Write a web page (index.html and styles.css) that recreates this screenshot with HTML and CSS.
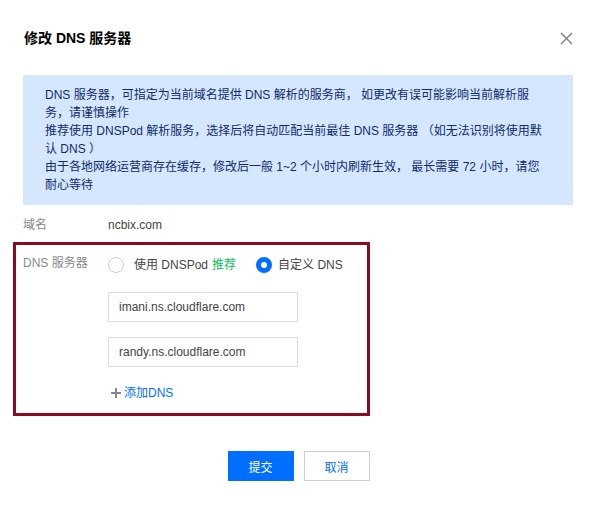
FILE: index.html
```html
<!DOCTYPE html>
<html lang="zh-CN">
<head>
<meta charset="utf-8">
<title>修改 DNS 服务器</title>
<link rel="stylesheet" href="styles.css">
</head>
<body>
<div class="dialog">
  <div class="dialog-head">
    <h3 class="dialog-title">修改 DNS 服务器</h3>
    <button class="close-btn" aria-label="关闭">
      <svg width="13" height="13" viewBox="0 0 13 13"><path d="M1 1L12 12M12 1L1 12" stroke="#888" stroke-width="1.6" fill="none"/></svg>
    </button>
  </div>
  <div class="info">
    DNS 服务器，可指定为当前域名提供 DNS 解析的服务商， 如更改有误可能影响当前解析服务，请谨慎操作<br>
    推荐使用 DNSPod 解析服务，选择后将自动匹配当前最佳 DNS 服务器 （如无法识别将使用默认 DNS ）<br>
    由于各地网络运营商存在缓存，修改后一般 1~2 个小时内刷新生效， 最长需要 72 小时，请您耐心等待
  </div>
  <div class="form">
    <div class="row">
      <div class="label">域名</div>
      <div class="value">ncbix.com</div>
    </div>
    <div class="highlight">
      <div class="row">
        <div class="label">DNS 服务器</div>
        <div class="field">
          <div class="radios">
            <label class="radio"><span class="dot"></span>使用 DNSPod <span class="rec">推荐</span></label>
            <label class="radio checked"><span class="dot"></span>自定义 DNS</label>
          </div>
          <div class="input">imani.ns.cloudflare.com</div>
          <div class="input">randy.ns.cloudflare.com</div>
          <a class="add"><span class="plus"></span>添加DNS</a>
        </div>
      </div>
    </div>
  </div>
  <div class="footer">
    <button class="btn primary">提交</button>
    <button class="btn weak">取消</button>
  </div>
</div>
</body>
</html>
```

FILE: styles.css
```css
html, body {
  margin: 0;
  padding: 0;
  background: #fff;
}
body {
  font-family: "Liberation Sans", Arial, "Noto Sans CJK SC", sans-serif;
  font-size: 12px;
  color: #444;
}
.dialog {
  width: 597px;
  height: 506px;
  box-sizing: border-box;
  padding: 0 24px 0 23px;
}
.dialog-head {
  display: flex;
  align-items: center;
  justify-content: space-between;
  height: 20px;
  padding-top: 28px;
}
.dialog-title {
  margin: 0 0 0 1px;
  font-size: 14px;
  font-weight: bold;
  color: #000;
  line-height: 20px;
}
.close-btn {
  border: 0;
  background: none;
  padding: 0;
  width: 13px;
  height: 13px;
  display: flex;
  margin-top: 1px;
}
.info {
  margin-top: 27px;
  background: #d5e7ff;
  color: #0f2a6e;
  line-height: 18px;
  padding: 11px 24px 11px 22px;
}
.form {
  margin-top: 11px;
}
.row {
  display: flex;
  line-height: 18px;
}
.label {
  width: 85px;
  flex: none;
  color: #888;
}
.value {
  color: #444;
}
.highlight {
  margin: 8px 0 0 -10px;
  width: 357px;
  height: 174px;
  box-sizing: border-box;
  border: 3px solid #8a0b1f;
  padding: 9px 0 0 7px;
}
.field {
  display: flex;
  flex-direction: column;
  align-items: flex-start;
}
.radios {
  display: flex;
  gap: 20px;
  height: 24px;
  align-items: center;
  margin-top: -1px;
}
.radio {
  display: flex;
  align-items: center;
  color: #444;
}
.rec {
  color: #0abf5b;
  margin-left: 4px;
}
.dot {
  width: 16px;
  height: 16px;
  box-sizing: border-box;
  border: 1px solid #ccc;
  border-radius: 50%;
  margin-right: 10px;
  background: #fff;
}
.radio.checked .dot {
  border: 5px solid #006eff;
  margin-right: 6px;
}
.input {
  width: 190px;
  height: 30px;
  box-sizing: border-box;
  border: 1px solid #ddd;
  padding: 0 10px;
  line-height: 28px;
  color: #444;
  font-size: 12px;
}
.radios + .input {
  margin-top: 15px;
}
.input + .input {
  margin-top: 15px;
}
.add {
  margin-top: 17px;
  margin-left: 3px;
  display: flex;
  align-items: center;
  color: #006eff;
  line-height: 18px;
}
.plus {
  position: relative;
  width: 10px;
  height: 10px;
  margin-right: 3px;
}
.plus::before,
.plus::after {
  content: "";
  position: absolute;
  background: #888;
}
.plus::before {
  left: 0;
  top: 4px;
  width: 10px;
  height: 2px;
}
.plus::after {
  left: 4px;
  top: 0;
  width: 2px;
  height: 10px;
}
.footer {
  display: flex;
  justify-content: center;
  gap: 10px;
  margin-top: 35px;
  padding-left: 1px;
}
.btn {
  width: 66px;
  height: 30px;
  box-sizing: border-box;
  font-family: inherit;
  font-size: 12px;
  padding: 0;
  cursor: pointer;
}
.btn.primary {
  background: #006eff;
  border: 1px solid #006eff;
  color: #fff;
}
.btn.weak {
  background: #fff;
  border: 1px solid #c9d0dc;
  color: #006eff;
}
```
